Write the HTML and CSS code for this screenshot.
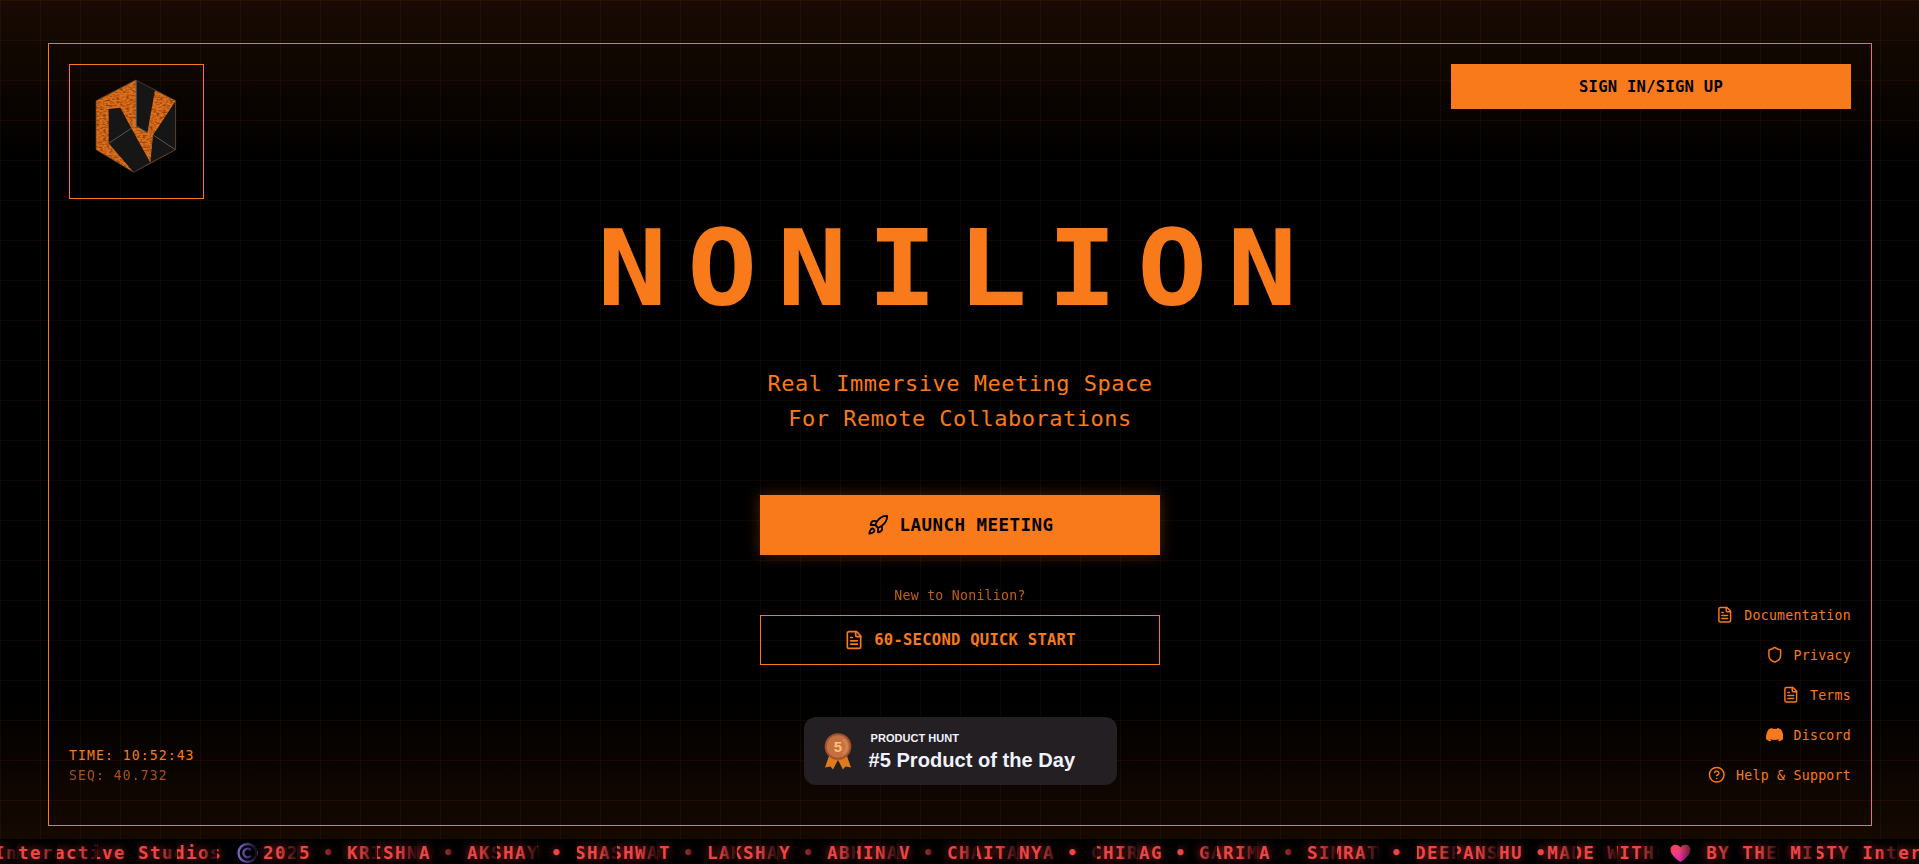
FILE: index.html
```html
<!DOCTYPE html>
<html lang="en">
<head>
<meta charset="utf-8">
<title>Nonilion</title>
<link rel="stylesheet" href="styles.css">
</head>
<body>
<svg class="defs" width="0" height="0" aria-hidden="true">
  <symbol id="i-doc" viewBox="0 0 24 24"><path d="M15 2H6a2 2 0 0 0-2 2v16a2 2 0 0 0 2 2h12a2 2 0 0 0 2-2V7Z"/><path d="M14 2v4a2 2 0 0 0 2 2h4"/><path d="M10 9H8M16 13H8M16 17H8"/></symbol>
</svg>
<div class="page">
  <main class="stage">
    <div class="frame">
      <div class="side">
        <div class="logo">
          <svg viewBox="211 195 399 399">
            <defs>
              <filter id="grain" x="0" y="0" width="1" height="1" color-interpolation-filters="sRGB">
                <feTurbulence type="fractalNoise" baseFrequency=".1 .2" numOctaves="2" seed="4"/>
                <feColorMatrix values="0 0 0 0 .45  0 0 0 0 .2  0 0 0 0 .02  2 0 0 0 -.8"/>
                <feComposite in2="SourceGraphic" operator="in" result="n"/>
                <feMerge><feMergeNode in="SourceGraphic"/><feMergeNode in="n"/></feMerge>
              </filter>
            </defs>
            <path filter="url(#grain)" fill="#e0701c" d="M408 240 528 302V449L402 517 289 449V302Z"/>
            <g fill="#161616">
              <path d="M409 240 466 270 443 398 409 378Z"/>
              <path d="M327 327 362 323 395 385 452 488 402 517 327 430Z"/>
              <path d="M527 304V449L452 488 460 406Z"/>
            </g>
            <g fill="none" stroke="#555" stroke-width="3">
              <path d="M327 430 395 385M462 406 527 449M410 240V378L443 398"/>
              <path stroke="#4a4038" stroke-width="2" d="M408 240 528 302V449L402 517 289 449V302Z"/>
            </g>
          </svg>
        </div>
        <div class="clock"><div>TIME: 10:52:43</div><div class="seq">SEQ: 40.732</div></div>
      </div>

      <div class="hero">
        <h1 class="title">NONILION</h1>
        <p class="tagline">Real Immersive Meeting Space<br>For Remote Collaborations</p>
        <a class="btn launch">
          <svg class="icon" viewBox="0 0 24 24"><path d="M4.5 16.5c-1.5 1.26-2 5-2 5s3.74-.5 5-2c.71-.84.7-2.13-.09-2.91a2.18 2.18 0 0 0-2.91-.09z"/><path d="m12 15-3-3a22 22 0 0 1 2-3.95A12.88 12.88 0 0 1 22 2c0 2.72-.78 7.5-6 11a22.35 22.35 0 0 1-4 2z"/><path d="M9 12H4s.55-3.03 2-4c1.62-1.08 5 0 5 0"/><path d="M12 15v5s3.03-.55 4-2c1.08-1.62 0-5 0-5"/></svg>
          <span>LAUNCH MEETING</span>
        </a>
        <p class="hint">New to Nonilion?</p>
        <a class="btn quick"><svg class="icon"><use href="#i-doc"/></svg><span>60-SECOND QUICK START</span></a>
        <div class="badge">
          <svg class="medal" viewBox="0 0 26 36">
            <path fill="#e07b1c" d="M4 23 0 34.500 5.500 33.500 8 36.500 13 27 18 36.500 20.500 33.500 26 34.500 22 23Z"/>
            <circle cx="13" cy="13.500" r="13.300" fill="#a3512d"/>
            <circle cx="13" cy="13.500" r="11.300" fill="#c5713f"/>
            <path d="M19 5.500A10 10 0 0 1 19 21.500L17 20A8 8 0 0 0 17 7Z" fill="#cf8454"/>
            <text x="13" y="19" text-anchor="middle">5</text>
          </svg>
          <div class="badge-text"><div class="badge-small">PRODUCT HUNT</div><div class="badge-big">#5 Product of the Day</div></div>
        </div>
      </div>

      <div class="side right">
        <a class="btn sign">SIGN IN/SIGN UP</a>
        <nav class="links">
          <a><svg class="icon"><use href="#i-doc"/></svg>Documentation</a>
          <a><svg class="icon" viewBox="0 0 24 24"><path d="M20 13c0 5-3.500 7.500-7.660 8.950a1 1 0 0 1-.67-.01C7.500 20.500 4 18 4 13V6a1 1 0 0 1 1-1c2 0 4.500-1.200 6.240-2.720a1.170 1.170 0 0 1 1.520 0C14.510 3.810 17 5 19 5a1 1 0 0 1 1 1z"/></svg>Privacy</a>
          <a><svg class="icon"><use href="#i-doc"/></svg>Terms</a>
          <a><svg class="icon solid" viewBox="0 0 24 24"><path d="M20.317 4.370a19.791 19.791 0 0 0-4.885-1.515.074.074 0 0 0-.079.037c-.21.375-.444.864-.608 1.250a18.270 18.270 0 0 0-5.487 0 12.640 12.640 0 0 0-.617-1.250.077.077 0 0 0-.079-.037A19.736 19.736 0 0 0 3.677 4.370a.07.07 0 0 0-.032.027C.533 9.046-.32 13.580.099 18.057a.082.082 0 0 0 .031.057 19.900 19.900 0 0 0 5.993 3.030.078.078 0 0 0 .084-.028c.462-.63.874-1.295 1.226-1.994a.076.076 0 0 0-.041-.106 13.107 13.107 0 0 1-1.872-.892.077.077 0 0 1-.008-.128c.126-.094.252-.192.372-.292a.074.074 0 0 1 .077-.01c3.928 1.793 8.180 1.793 12.062 0a.074.074 0 0 1 .078.009c.12.1.246.199.373.293a.077.077 0 0 1-.006.127 12.299 12.299 0 0 1-1.873.892.077.077 0 0 0-.041.107c.36.698.772 1.362 1.225 1.993a.076.076 0 0 0 .084.028 19.839 19.839 0 0 0 6.002-3.030.077.077 0 0 0 .032-.054c.5-5.177-.838-9.674-3.549-13.660a.061.061 0 0 0-.031-.03z"/></svg>Discord</a>
          <a><svg class="icon" viewBox="0 0 24 24"><circle cx="12" cy="12" r="10"/><path d="M9.090 9a3 3 0 0 1 5.830 1c0 2-3 3-3 3M12 17h.01"/></svg>Help &amp; Support</a>
        </nav>
      </div>
    </div>
  </main>

  <footer class="ticker">
    <div class="ticker-track">Interactive Studios <svg class="emoji copy" viewBox="0 0 27 22"><circle cx="13.500" cy="11" r="9" fill="none" stroke="#7f62cf" stroke-width="2.300"/><path d="M17 8.200A4.300 4.300 0 1 0 17 13.800" fill="none" stroke="#7f62cf" stroke-width="2.300"/></svg>2025 • KRISHNA • AKSHAY • SHASHWAT • LAKSHAY • ABHINAV • CHAITANYA • CHIRAG • GARIMA • SIMRAT • DEEPANSHU •MADE WITH <svg class="emoji" viewBox="0 0 27 22"><defs><linearGradient id="hg" x1="0" y1="0" x2=".3" y2="1"><stop offset="0" stop-color="#f4405c"/><stop offset=".5" stop-color="#f0407a"/><stop offset="1" stop-color="#e022b8"/></linearGradient></defs><path fill="url(#hg)" d="M13.500 20C10 18 3.500 13 3.500 7.800 3.500 2.500 10.500 1 13.500 5.500 16.500 1 23.500 2.500 23.500 7.800 23.500 13 17 18 13.500 20Z"/></svg> BY THE MISTY Interactive</div>
  </footer>
</div>
</body>
</html>
```

FILE: styles.css
```css
:root {
  --orange: #f97a1a;
  --mono: "DejaVu Sans Mono", "Liberation Mono", monospace;
}
* { box-sizing: border-box; }
body { margin: 0; background: #000; color: var(--orange); font-family: var(--mono); }
h1, p { margin: 0; }
.defs { position: absolute; }
.page {
  height: 864px;
  display: flex;
  flex-direction: column;
  overflow: hidden;
  background:
    linear-gradient(rgba(249, 115, 22, .06) 1px, transparent 1px) 0 0 / 40px 40px,
    linear-gradient(90deg, rgba(249, 115, 22, .06) 1px, transparent 1px) 0 0 / 40px 40px,
    linear-gradient(rgba(249, 105, 22, .1), transparent 19%, transparent 81%, rgba(249, 105, 22, .1)),
    #000;
}
.stage { flex: 1; padding: 43px 47px 13px 48px; display: flex; }
.frame {
  flex: 1;
  border: 1px solid var(--orange);
  padding: 20px;
  display: grid;
  grid-template-columns: 400px 1fr 400px;
}
.side { display: flex; flex-direction: column; justify-content: space-between; align-items: flex-start; }
.right { align-items: flex-end; }
.logo { width: 135px; height: 135px; border: 1px solid var(--orange); }
.logo svg { display: block; width: 133px; height: 133px; }
.clock { font-size: 13.2px; line-height: 20px; letter-spacing: 1.03px; padding-bottom: 19px; }
.seq { opacity: .66; }

.icon { fill: none; stroke: currentColor; stroke-width: 2; stroke-linecap: round; stroke-linejoin: round; flex: none; }
.btn { display: flex; align-items: center; justify-content: center; width: 400px; font-weight: 700; }
.sign { height: 45px; background: var(--orange); color: #000; font-size: 15.5px; letter-spacing: .27px; }

.hero { display: flex; flex-direction: column; align-items: center; padding-top: 144.5px; }
.title { font-size: 105.6px; line-height: 120px; letter-spacing: 18.25px; white-space: nowrap; transform: translateX(-3px) scaleX(1.1); }
.tagline { margin-top: 37.5px; font-size: 22px; line-height: 35px; letter-spacing: .5px; text-align: center; }
.launch {
  margin-top: 59px;
  height: 60px;
  background: var(--orange);
  color: #000;
  font-size: 17.5px;
  letter-spacing: .45px;
  gap: 11px;
  box-shadow: 0 0 15px rgba(249, 115, 22, .3);
}
.launch .icon { width: 22px; height: 22px; }
.hint { margin-top: 31px; font-size: 13.2px; line-height: 20px; letter-spacing: .27px; opacity: .78; }
.quick { margin-top: 9px; height: 50px; border: 1px solid var(--orange); font-size: 15.5px; letter-spacing: .27px; gap: 10px; }
.quick .icon { width: 20px; height: 20px; }

.badge {
  margin-top: 52px;
  width: 313px;
  height: 68px;
  border-radius: 12px;
  background: #231f22;
  display: flex;
  align-items: flex-start;
  padding: 16px 0 0 21px;
  color: #f0f2ff;
  font-family: "Liberation Sans", Arial, sans-serif;
  font-weight: 700;
}
.medal { width: 26px; height: 36px; overflow: visible; }
.medal text { font-size: 15px; fill: #ffc078; }
.badge-text { padding-left: 18px; white-space: nowrap; margin-top: -1px; }
.badge-small { font-size: 11px; line-height: 12px; padding-left: 2px; letter-spacing: .05px; }
.badge-big { font-size: 20.1px; line-height: 24px; margin-top: 4px; }

.links { display: flex; flex-direction: column; align-items: flex-end; padding-bottom: 10px; }
.links a { display: flex; align-items: center; gap: 10.5px; height: 40px; font-size: 13.2px; letter-spacing: .27px; }
.links .icon { width: 17.5px; height: 17.5px; }
.links .solid { fill: currentColor; stroke: none; }

.ticker {
  position: relative;
  height: 25px;
  overflow: hidden;
  background: #000;
  color: #ef4444;
  font-size: 17.5px;
  font-weight: 700;
  line-height: 29px;
  letter-spacing: 1.465px;
}
.ticker-track { margin-left: -6px; white-space: pre; text-shadow: 0 0 10px rgba(239, 68, 68, .7); }
.ticker::after {
  content: "";
  position: absolute;
  inset: 0;
  background: linear-gradient(90deg, transparent 55%, rgba(0, 0, 0, .88)) 17px 0 / 40px 100%;
}
.emoji { width: 27px; height: 22px; vertical-align: -5px; }
.copy { margin-right: 2px; }
```
